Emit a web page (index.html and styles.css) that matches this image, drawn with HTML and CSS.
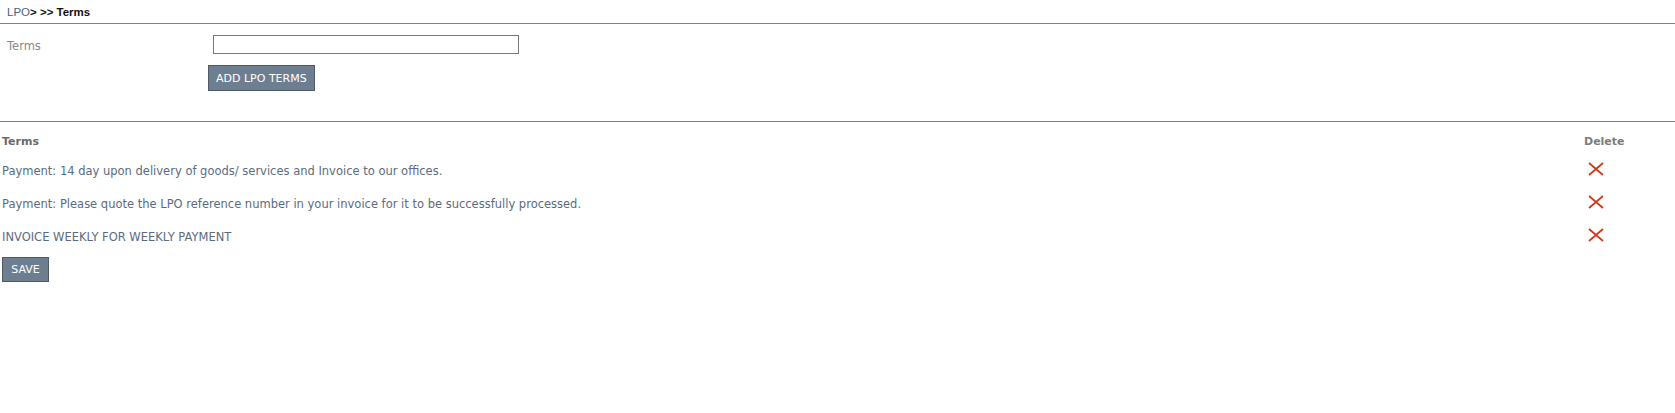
FILE: index.html
```html
<!DOCTYPE html>
<html>
<head>
<meta charset="utf-8">
<link rel="stylesheet" href="styles.css">
</head>
<body>
<div class="crumb"><a class="crumb-link">LPO</a>&gt; &gt;&gt; Terms</div>
<div class="form">
  <div class="form-row">
    <label class="label">Terms</label>
    <input class="field" type="text">
  </div>
  <div class="form-row actions">
    <button class="btn add">ADD LPO TERMS</button>
  </div>
</div>
<div class="grid">
  <div class="grid-row head">
    <div class="col-term">Terms</div>
    <div class="col-del">Delete</div>
  </div>
  <div class="grid-row">
    <div class="col-term">Payment: 14 day upon delivery of goods/ services and Invoice to our offices.</div>
    <div class="col-del"><svg class="x" viewBox="0 0 16 14" width="16" height="14"><path d="M1 1 L15 13 M15 1 L1 13" stroke="#d03a1c" stroke-width="1.8" fill="none"/></svg></div>
  </div>
  <div class="grid-row">
    <div class="col-term">Payment: Please quote the LPO reference number in your invoice for it to be successfully processed.</div>
    <div class="col-del"><svg class="x" viewBox="0 0 16 14" width="16" height="14"><path d="M1 1 L15 13 M15 1 L1 13" stroke="#d03a1c" stroke-width="1.8" fill="none"/></svg></div>
  </div>
  <div class="grid-row">
    <div class="col-term">INVOICE WEEKLY FOR WEEKLY PAYMENT</div>
    <div class="col-del"><svg class="x" viewBox="0 0 16 14" width="16" height="14"><path d="M1 1 L15 13 M15 1 L1 13" stroke="#d03a1c" stroke-width="1.8" fill="none"/></svg></div>
  </div>
  <div class="save-row"><button class="btn save">SAVE</button></div>
</div>
</body>
</html>
```
FILE: styles.css
```css
body {
  margin: 0;
  font-family: "DejaVu Sans", sans-serif;
  font-size: 11.5px;
  color: #5b6b82;
  background: #fff;
}
.crumb {
  height: 23px;
  line-height: 24px;
  padding-left: 7px;
  font-family: "Liberation Sans", Arial, sans-serif;
  font-weight: bold;
  font-size: 11.5px;
  color: #111;
  border-bottom: 1px solid #808080;
}
.crumb-link {
  color: #4d5f86;
  font-weight: normal;
}
.form {
  padding-top: 11px;
  height: 86px;
  border-bottom: 1px solid #808080;
}
.form-row {
  display: flex;
  align-items: center;
}
.label {
  width: 206px;
  padding-left: 7px;
  padding-top: 3px;
  color: #8a8a8a;
}
.field {
  width: 306px;
  height: 19px;
  box-sizing: border-box;
  border: 1px solid #7a7a7a;
  margin: 0;
  padding: 0;
}
.actions {
  padding-left: 208px;
  margin-top: 11px;
}
.btn {
  background: #6d7e91;
  color: #fff;
  border: 1px solid #4f5a66;
  font-family: "DejaVu Sans", sans-serif;
  font-size: 11px;
  height: 26px;
  padding: 0 7px;
  margin: 0;
}
.grid {
  padding: 0 2px;
}
.grid-row {
  display: flex;
  justify-content: space-between;
  height: 33px;
  align-items: center;
}
.head {
  height: 32px;
  box-sizing: border-box;
  padding-top: 7px;
  font-weight: bold;
  font-size: 11px;
  color: #6a6a6a;
}
.head .col-del {
  color: #7d7d7d;
  padding-left: 0;
}
.col-del {
  width: 89px;
  box-sizing: border-box;
  padding-left: 4px;
}
.x {
  display: block;
  margin-top: -4px;
}
.save-row {
  padding-top: 4px;
}
.save {
  height: 25px;
  width: 47px;
  padding: 0;
}
```
